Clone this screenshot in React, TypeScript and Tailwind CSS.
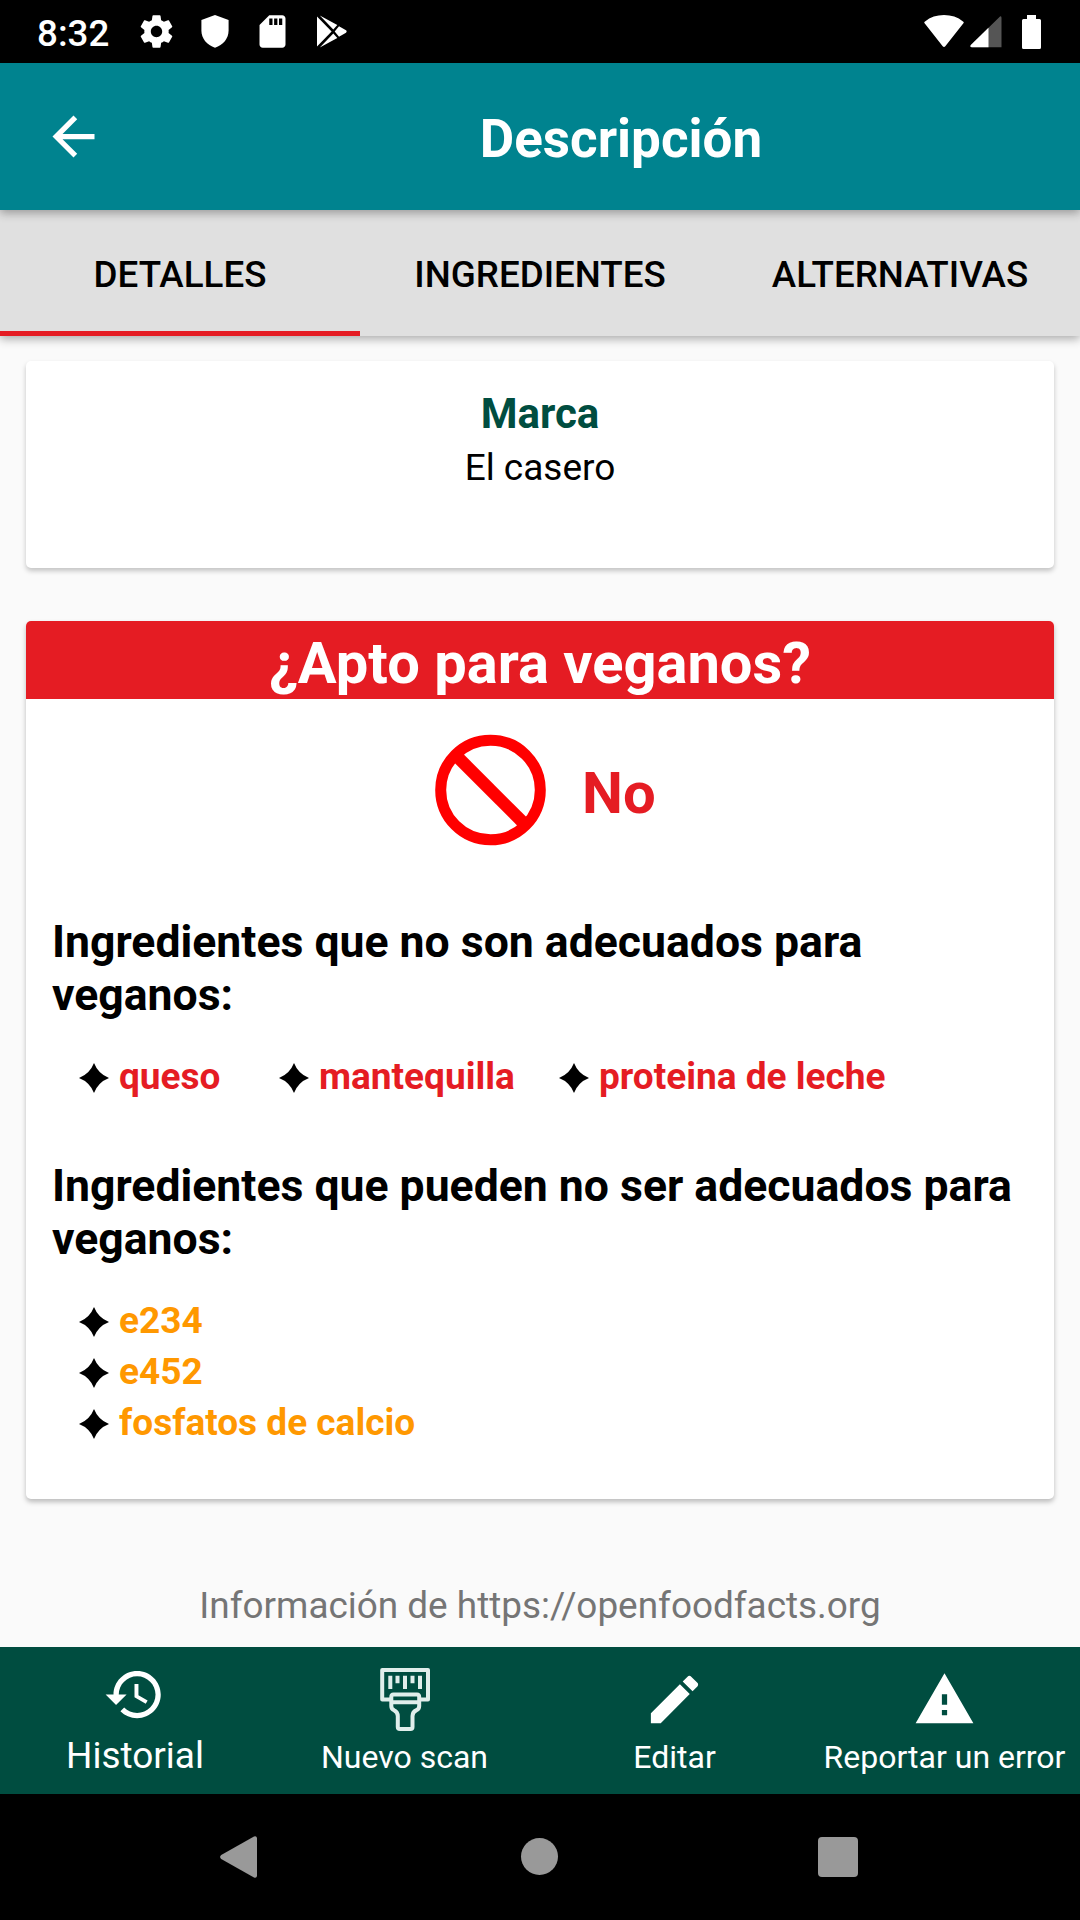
import React from "react";

function Icon({ d, size, className = "" }: { d: string; size: number; className?: string }) {
  return (
    <svg width={size} height={size} viewBox="0 0 24 24" fill="currentColor" className={`shrink-0 ${className}`}>
      <path d={d} />
    </svg>
  );
}

const BACK = "M20 11H7.83l5.59-5.59L12 4l-8 8 8 8 1.41-1.41L7.83 13H20v-2z";
const GEAR =
  "M19.43 12.98c.04-.32.07-.64.07-.98s-.03-.66-.07-.98l2.11-1.65c.19-.15.24-.42.12-.64l-2-3.46c-.12-.22-.39-.3-.61-.22l-2.49 1c-.52-.4-1.08-.73-1.69-.98l-.38-2.65C14.46 2.18 14.25 2 14 2h-4c-.25 0-.46.18-.49.42l-.38 2.65c-.61.25-1.17.59-1.69.98l-2.49-1c-.23-.09-.49 0-.61.22l-2 3.46c-.13.22-.07.49.12.64l2.11 1.65c-.04.32-.07.65-.07.98s.03.66.07.98l-2.11 1.65c-.19.15-.24.42-.12.64l2 3.46c.12.22.39.3.61.22l2.49-1c.52.4 1.08.73 1.69.98l.38 2.65c.03.24.24.42.49.42h4c.25 0 .46-.18.49-.42l.38-2.65c.61-.25 1.17-.59 1.69-.98l2.49 1c.23.09.49 0 .61-.22l2-3.46c.12-.22.07-.49-.12-.64l-2.11-1.65zM12 15.5c-1.93 0-3.5-1.57-3.5-3.5s1.57-3.5 3.5-3.5 3.5 1.57 3.5 3.5-1.57 3.5-3.5 3.5z";
const SD = "M18 2h-8L4.02 8 4 20c0 1.1.9 2 2 2h12c1.1 0 2-.9 2-2V4c0-1.1-.9-2-2-2zm-6 6h-2V4h2v4zm3 0h-2V4h2v4zm3 0h-2V4h2v4z";
const HISTORY =
  "M13 3c-4.97 0-9 4.03-9 9H1l3.89 3.89.07.14L9 12H6c0-3.87 3.13-7 7-7s7 3.13 7 7-3.13 7-7 7c-1.93 0-3.68-.79-4.94-2.06l-1.42 1.42C8.27 19.99 10.51 21 13 21c4.97 0 9-4.03 9-9s-4.03-9-9-9zm-1 5v5l4.28 2.54.72-1.21-3.5-2.08V8H12z";
const PENCIL =
  "M3 17.25V21h3.75L17.81 9.94l-3.75-3.75L3 17.25zM20.71 7.04c.39-.39.39-1.02 0-1.41l-2.34-2.34c-.39-.39-1.02-.39-1.41 0l-1.83 1.83 3.75 3.75 1.83-1.83z";
const WARNING = "M1 21h22L12 2 1 21zm12-3h-2v-2h2v2zm0-4h-2v-4h2v4z";

function StatusBar() {
  return (
    <header className="flex h-[63px] items-center bg-black pr-[39px] pl-[37px] text-white">
      <span className="w-[100px] pt-[3px] text-[36.75px] leading-[43px] font-medium">8:32</span>
      <Icon d={GEAR} size={39} />
      <svg width="28" height="33" viewBox="0 0 28 33" fill="currentColor" className="ml-[25px]">
        <path d="M14 0 27.6 5v10.5c0 8-5.6 14.6-13.6 17.3C6 30.1.4 23.500.4 15.500V5z" />
      </svg>
      <Icon d={SD} size={39} className="ml-[24px]" />
      <svg width="30" height="33" viewBox="0 0 30 33" fill="currentColor" className="ml-[25px]">
        <path d="M0 1.500 14.600 16.500 0 31.500zM2.800.500 20.300 10 16.300 14.600zM2.800 32.500 16.300 18.400 20.300 23zM22 11.200 29 15.300q1.300 1.200 0 2.400L22 21.800 17.700 16.500z" />
      </svg>
      <div className="ml-auto flex items-center">
        <svg width="40" height="33" viewBox="0 0 40 33" fill="currentColor">
          <path d="M.8 8.600Q-.4 7.400 1 6.400 9 0 20 0T39 6.400q1.400 1 .2 2.200L21.300 31.200q-1.300 1.400-2.600 0z" />
        </svg>
        <svg width="32" height="33" viewBox="0 0 32 33" className="ml-[6px]">
          <path d="M31.500 3Q31.500 0 29 2.500L.8 30Q-.5 32.300 2 32.300h29.500z" fill="#555" />
          <path d="M18.500 12.800.8 30Q-.5 32.300 2 32.300h16.500z" fill="#fff" />
        </svg>
        <svg width="19" height="34" viewBox="0 0 19 34" fill="currentColor" className="ml-[20px]">
          <path d="M5 0h9v4h3.500q1.500 0 1.500 1.500v27q0 1.500-1.500 1.500h-16Q0 34 0 32.500v-27Q0 4 1.500 4H5z" />
        </svg>
      </div>
    </header>
  );
}

function Toolbar() {
  return (
    <div className="relative z-20 flex h-[147px] items-center bg-[#00838f] text-white shadow-[0_3px_9px_rgba(0,0,0,0.32)]">
      <Icon d={BACK} size={63} className="ml-[42px]" />
      <h1 className="ml-[57px] flex-1 pt-[5px] text-center text-[53px] leading-[62px] font-bold">Descripción</h1>
    </div>
  );
}

function Tabs() {
  return (
    <nav className="relative z-10 grid h-[126px] grid-cols-3 bg-[#e0e0e0] shadow-[0_3px_9px_rgba(0,0,0,0.32)]">
      {["DETALLES", "INGREDIENTES", "ALTERNATIVAS"].map((t, i) => (
        <button
          key={t}
          className={
            i === 0
              ? "border-b-[5px] border-[#e51c23] pt-[8px] text-[36.75px] leading-[43px] font-medium"
              : "border-b-[5px] border-transparent pt-[8px] text-[36.75px] leading-[43px] font-medium"
          }
        >
          {t}
        </button>
      ))}
    </nav>
  );
}

function Bullet({ children, className }: { children: React.ReactNode; className: string }) {
  return (
    <li className={`flex items-center text-[37px] font-bold ${className}`}>
      <svg width="30" height="30" viewBox="0 0 30 30" className="mt-[2px] mr-[10px] shrink-0 fill-black">
        <path d="M15 0Q19.200 10.800 30 15 19.200 19.200 15 30 10.800 19.200 0 15 10.800 10.800 15 0z" />
      </svg>
      {children}
    </li>
  );
}

function ScanIcon() {
  return (
    <svg width="63" height="63" viewBox="0 0 63 63" fill="none" stroke="#e0eeeb" strokeWidth="4" strokeLinejoin="round">
      <path d="M16 31.500H8.200V2H54V31.500H46.500" />
      <path d="M16.300 7.700V21M23.500 7.700V15.300M31 7.700V21M38.500 7.700V15.300M46 7.700V21" />
      <path d="M19.500 26.500H43Q45.200 26.500 45.200 29V38Q45.200 41 42.500 42.200 38.500 44 38.500 48V59Q38.500 61 36.500 61H26Q23.800 61 23.800 59V48Q23.800 44 20 42.200 17.300 41 17.300 38V29Q17.300 26.500 19.500 26.500zM17.300 34.200H45.200" />
    </svg>
  );
}

function BottomItem({ label, children }: { label: string; children: React.ReactNode }) {
  return (
    <button className="flex flex-col items-center pt-[21px] whitespace-nowrap text-white">
      {children}
      <span className="mt-[7px] mr-px text-[32px] leading-[38px]">{label}</span>
    </button>
  );
}

export default function App() {
  return (
    <div className="flex h-[1920px] w-[1080px] flex-col overflow-hidden bg-[#fafafa] font-['Roboto',sans-serif] text-black">
      <StatusBar />
      <Toolbar />
      <Tabs />
      <main className="flex-1 px-[26px] pt-[25px]">
        <section className="h-[207px] rounded-[5px] bg-white pt-[28px] text-center shadow-[0_3px_5px_rgba(0,0,0,0.22)]">
          <h2 className="text-[42px] leading-[50px] font-bold text-[#004d40]">Marca</h2>
          <p className="pt-[7px] text-[37px] leading-[43px]">El casero</p>
        </section>
        <section className="mt-[53px] h-[878px] overflow-hidden rounded-[5px] bg-white shadow-[0_3px_5px_rgba(0,0,0,0.25)]">
          <h2 className="h-[78px] bg-[#e51c23] pt-[8px] text-center text-[57.85px] leading-[68px] font-bold text-white">
            ¿Apto para veganos?
          </h2>
          <div className="flex items-center pt-[35px] pl-[409px]">
            <svg width="111" height="112" viewBox="0 0 111 112" fill="none" stroke="#f00" strokeWidth="11">
              <circle cx="55.500" cy="56" r="49.800" />
              <path d="M21 21.500 90 90.500" strokeWidth="12.5" />
            </svg>
            <span className="ml-[36px] pt-[6px] text-[58px] leading-[68px] font-bold text-[#e51c23]">No</span>
          </div>
          <h3 className="mt-[70px] pr-[24px] pl-[26px] text-[44.55px] leading-[53px] font-bold">
            Ingredientes que no son adecuados para veganos:
          </h3>
          <ul className="mt-[29px] flex pl-[53px] leading-[51px] text-[#e51c23]">
            <Bullet className="w-[200px]">queso</Bullet>
            <Bullet className="w-[280px]">mantequilla</Bullet>
            <Bullet className="">proteina de leche</Bullet>
          </ul>
          <h3 className="mt-[58px] pr-[24px] pl-[26px] text-[44.55px] leading-[53px] font-bold">
            Ingredientes que pueden no ser adecuados para veganos:
          </h3>
          <ul className="mt-[29px] pl-[53px] leading-[51px] text-[#ff9800]">
            <Bullet className="">e234</Bullet>
            <Bullet className="">e452</Bullet>
            <Bullet className="">fosfatos de calcio</Bullet>
          </ul>
        </section>
        <p className="mt-[85px] text-center text-[36.9px] leading-[43px] text-[#757575]">Información de https://openfoodfacts.org</p>
      </main>
      <nav className="grid h-[147px] grid-cols-4 bg-[#004d40]">
        <button className="flex flex-col items-center pt-[16px] text-white">
          <Icon d={HISTORY} size={63} className="mr-px" />
          <span className="mt-[8px] text-[37px] leading-[43px]">Historial</span>
        </button>
        <BottomItem label="Nuevo scan">
          <ScanIcon />
        </BottomItem>
        <BottomItem label="Editar">
          <Icon d={PENCIL} size={63} className="mr-[2px]" />
        </BottomItem>
        <BottomItem label="Reportar un error">
          <Icon d={WARNING} size={63} className="mr-[2px]" />
        </BottomItem>
      </nav>
      <footer className="flex h-[126px] items-center justify-between bg-black pr-[222px] pl-[220px]">
        <svg width="37" height="42" viewBox="0 0 37 42" fill="#999">
          <path d="M37 2V40Q36.500 42.500 34 41.500L1.200 23Q-1 21 1.200 19L34 .500Q36.500-.500 37 2z" />
        </svg>
        <span className="mb-px ml-[4px] size-[37px] rounded-full bg-[#999]" />
        <span className="size-[40px] rounded-[4px] bg-[#999]" />
      </footer>
    </div>
  );
}
